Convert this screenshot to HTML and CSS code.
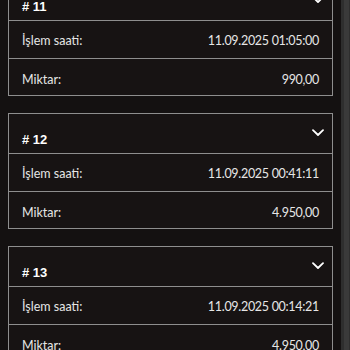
FILE: index.html
```html
<!DOCTYPE html>
<html lang="tr">
<head>
<meta charset="utf-8">
<link rel="stylesheet" href="styles.css">
</head>
<body>
<div class="screen">
  <main class="list">
    <section class="card">
      <div class="card-head"><span class="title"># 11</span><svg class="chev" viewBox="0 0 12 8" width="12" height="8"><path d="M1 1.2 L6 6 L11 1.2" fill="none" stroke="#fff" stroke-width="1.8" stroke-linecap="round" stroke-linejoin="round"/></svg></div>
      <div class="row"><span>İşlem saati:</span><span class="val">11.09.2025 01:05:00</span></div>
      <div class="row last"><span>Miktar:</span><span class="val">990,00</span></div>
    </section>
    <section class="card">
      <div class="card-head"><span class="title"># 12</span><svg class="chev" viewBox="0 0 12 8" width="12" height="8"><path d="M1 1.2 L6 6 L11 1.2" fill="none" stroke="#fff" stroke-width="1.8" stroke-linecap="round" stroke-linejoin="round"/></svg></div>
      <div class="row"><span>İşlem saati:</span><span class="val">11.09.2025 00:41:11</span></div>
      <div class="row last"><span>Miktar:</span><span class="val">4.950,00</span></div>
    </section>
    <section class="card">
      <div class="card-head"><span class="title"># 13</span><svg class="chev" viewBox="0 0 12 8" width="12" height="8"><path d="M1 1.2 L6 6 L11 1.2" fill="none" stroke="#fff" stroke-width="1.8" stroke-linecap="round" stroke-linejoin="round"/></svg></div>
      <div class="row"><span>İşlem saati:</span><span class="val">11.09.2025 00:14:21</span></div>
      <div class="row last"><span>Miktar:</span><span class="val">4.950,00</span></div>
    </section>
  </main>
  <div class="scrollbar"><div class="thumb"></div></div>
</div>
</body>
</html>
```
FILE: styles.css
```css
html, body {
  margin: 0;
  padding: 0;
  background: #141111;
}
.screen {
  display: flex;
  width: 350px;
  height: 350px;
  overflow: hidden;
}
.list {
  flex: 1;
  padding: 0 8px 0 8px;
  margin-top: -20px;
  font-family: Lato, "Liberation Sans", sans-serif;
  color: #e6e6e6;
}
.card {
  border: 1px solid #8e8e8e;
  background: #171313;
  margin-bottom: 17px;
}
.card-head {
  height: 39px;
  display: flex;
  align-items: center;
  justify-content: space-between;
  padding: 0 8px 0 13px;
}
.title {
  font-family: "Liberation Sans", Arial, sans-serif;
  font-weight: bold;
  font-size: 13px;
  color: #fff;
  padding-top: 11px;
}
.chev {
  display: block;
  margin-top: -2px;
}
.row {
  border-top: 1px solid #8e8e8e;
  display: flex;
  align-items: center;
  justify-content: space-between;
  padding: 2px 13px 0 13px;
  box-sizing: border-box;
  height: 38px;
  font-size: 12.5px;
}
.row.last {
  height: 37px;
  padding-top: 5px;
}
.val {
  letter-spacing: -0.3px;
}
.scrollbar {
  width: 9px;
  background: #2e2e2e;
}
.thumb {
  margin: 0 1px 0 3px;
  height: 100%;
  background: #3a3a3a;
}
```
